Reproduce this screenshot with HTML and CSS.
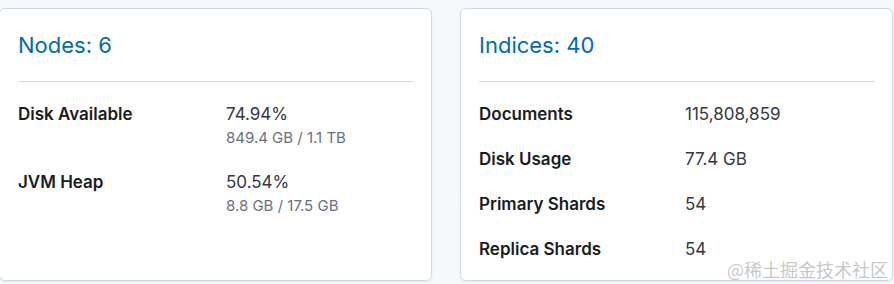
FILE: index.html
```html
<!DOCTYPE html>
<html lang="en">
<head>
    <meta charset="UTF-8">
    <meta name="viewport" content="width=device-width, initial-scale=1.0">
    <title>Cluster Overview</title>
    <link rel="stylesheet" href="styles.css">
</head>
<body>
    <div class="panels">
        <div class="panel">
            <h2 class="panel-title">Nodes: 6</h2>
            <hr class="divider">
            <div class="stats">
                <div class="stat">
                    <div class="stat-label">Disk Available</div>
                    <div class="stat-value">
                        74.94%
                        <div class="stat-sub">849.4 GB / 1.1 TB</div>
                    </div>
                </div>
                <div class="stat">
                    <div class="stat-label">JVM Heap</div>
                    <div class="stat-value">
                        50.54%
                        <div class="stat-sub">8.8 GB / 17.5 GB</div>
                    </div>
                </div>
            </div>
        </div>

        <div class="panel">
            <h2 class="panel-title">Indices: 40</h2>
            <hr class="divider">
            <div class="stats stats-wide">
                <div class="stat">
                    <div class="stat-label">Documents</div>
                    <div class="stat-value">115,808,859</div>
                </div>
                <div class="stat">
                    <div class="stat-label">Disk Usage</div>
                    <div class="stat-value">77.4 GB</div>
                </div>
                <div class="stat">
                    <div class="stat-label">Primary Shards</div>
                    <div class="stat-value">54</div>
                </div>
                <div class="stat">
                    <div class="stat-label">Replica Shards</div>
                    <div class="stat-value">54</div>
                </div>
            </div>
        </div>
    </div>

    <div class="watermark">@稀土掘金技术社区</div>
</body>
</html>
```

FILE: styles.css
```css
:root {
    --primary-color: #006bb4;
    --background-color: #f7f8fb;
    --card-background: #ffffff;
    --text-color: #1a1c21;
    --value-color: #343741;
    --muted-color: #69707d;
    --border-color: #d3dae6;
}

* {
    margin: 0;
    padding: 0;
    box-sizing: border-box;
    font-family: 'Inter', 'Noto Sans', sans-serif;
}

body {
    background-color: var(--background-color);
    color: var(--text-color);
    width: 894px;
    height: 284px;
    overflow: hidden;
    position: relative;
}

.panels {
    display: flex;
    gap: 28px;
    padding-top: 8px;
    margin-left: -1px;
}

.panel {
    width: 433px;
    height: 273px;
    background-color: var(--card-background);
    border: 1px solid var(--border-color);
    border-radius: 6px;
    box-shadow: 0 1px 3px rgba(0, 0, 0, 0.06);
    padding: 20px 17px 0 18px;
}

.panel-title {
    font-size: 22px;
    font-weight: 400;
    line-height: 32px;
    color: var(--primary-color);
}

.divider {
    border: none;
    border-top: 1px solid var(--border-color);
    margin: 20px 0 20px;
}

.stats {
    display: flex;
    flex-direction: column;
    gap: 20px;
}

.stats-wide {
    gap: 21px;
}

.stat {
    display: flex;
    font-size: 17px;
    line-height: 24px;
}

.stat-label {
    width: 208px;
    font-weight: 600;
    color: var(--text-color);
}

.stats-wide .stat-label {
    width: 206px;
}

.stat-value {
    color: var(--value-color);
}

.stat-sub {
    font-size: 15px;
    line-height: 24px;
    color: var(--muted-color);
}

.watermark {
    position: absolute;
    right: 6px;
    bottom: 4px;
    font-family: 'Noto Sans CJK SC', sans-serif;
    font-size: 18px;
    line-height: 22px;
    color: rgba(150, 150, 150, 0.55);
}
```
